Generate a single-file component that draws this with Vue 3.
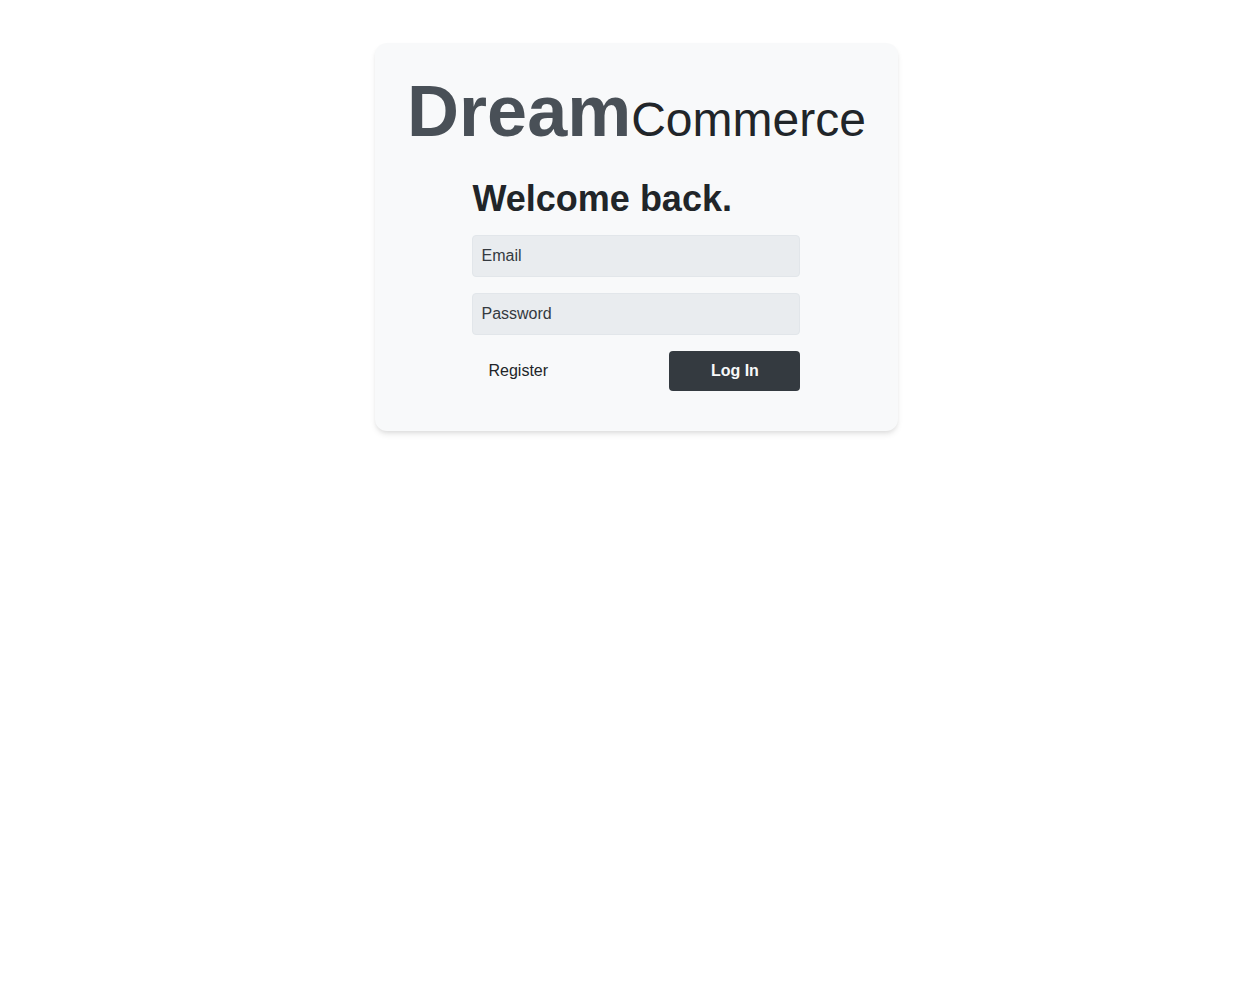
<script setup>
import { ref } from 'vue'

const email = ref('')
const password = ref('')
</script>

<template>
  <main class="page">
    <section class="card">
      <h1 class="brand"><span class="brand-strong">Dream</span><span class="brand-light">Commerce</span></h1>
      <form class="login" @submit.prevent>
        <h2 class="title">Welcome back.</h2>
        <input v-model="email" class="field" type="email" placeholder="Email" aria-label="Email" />
        <input v-model="password" class="field" type="password" placeholder="Password" aria-label="Password" />
        <div class="actions">
          <a class="register" href="#register">Register</a>
          <button class="submit" type="submit">Log In</button>
        </div>
      </form>
    </section>
  </main>
</template>

<style>
body {
  background: #fff;
}
</style>

<style scoped>
.page {
  display: flex;
  justify-content: center;
  padding: 43px 0 40px 16px;
  color: #212529;
  font-family: "Liberation Sans", Arial, sans-serif;
  font-size: 16px;
  line-height: 24px;
}

.card {
  box-sizing: border-box;
  padding: 32px 32px 40px;
  border-radius: 12px;
  background: #f8f9fa;
  box-shadow: 0 4px 6px -1px rgba(0, 0, 0, 0.1), 0 2px 4px -1px rgba(0, 0, 0, 0.06);
}

.brand {
  margin: 0 0 32px;
  font-size: 72px;
  font-weight: 400;
  line-height: 72px;
}

.brand-strong {
  color: #495057;
  font-weight: 700;
}

.brand-light {
  font-size: 48px;
  line-height: 48px;
}

.login {
  display: flex;
  flex-direction: column;
  gap: 16px;
  max-width: 328px;
  margin: 0 auto;
}

.title {
  margin: 0;
  font-size: 36px;
  line-height: 40px;
}

.field {
  box-sizing: border-box;
  width: 100%;
  padding: 8px;
  border: 1px solid #e2e6ea;
  border-radius: 4px;
  background: #e9ecef;
  color: #343a40;
  font: inherit;
}

.field::placeholder {
  color: #343a40;
  opacity: 1;
}

.actions {
  display: flex;
  justify-content: space-between;
}

.register {
  padding: 8px 16px;
  color: inherit;
  text-decoration: none;
}

.submit {
  width: 40%;
  padding: 8px;
  border: 0;
  border-radius: 4px;
  background: #343a40;
  color: #f8f9fa;
  font: inherit;
  font-weight: 700;
}
</style>
